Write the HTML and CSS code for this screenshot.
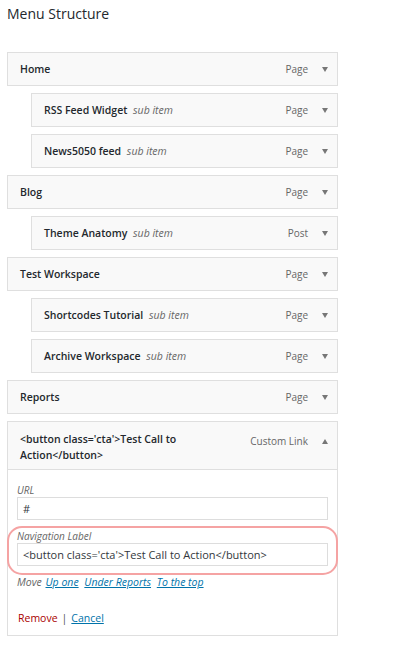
FILE: index.html
```html
<!DOCTYPE html>
<html>
<head>
<meta charset="utf-8">
<link rel="stylesheet" href="styles.css">
</head>
<body>
<h2 class="title">Menu Structure</h2>
<ul class="menu">
  <li class="item"><span class="item-title">Home</span><span class="controls"><span class="type">Page</span><span class="arrow down"></span></span></li>
  <li class="item sub"><span class="item-title">RSS Feed Widget <em class="subtag">sub item</em></span><span class="controls"><span class="type">Page</span><span class="arrow down"></span></span></li>
  <li class="item sub"><span class="item-title">News5050 feed <em class="subtag">sub item</em></span><span class="controls"><span class="type">Page</span><span class="arrow down"></span></span></li>
  <li class="item"><span class="item-title">Blog</span><span class="controls"><span class="type">Page</span><span class="arrow down"></span></span></li>
  <li class="item sub"><span class="item-title">Theme Anatomy <em class="subtag">sub item</em></span><span class="controls"><span class="type">Post</span><span class="arrow down"></span></span></li>
  <li class="item"><span class="item-title">Test Workspace</span><span class="controls"><span class="type">Page</span><span class="arrow down"></span></span></li>
  <li class="item sub"><span class="item-title">Shortcodes Tutorial <em class="subtag">sub item</em></span><span class="controls"><span class="type">Page</span><span class="arrow down"></span></span></li>
  <li class="item sub"><span class="item-title">Archive Workspace <em class="subtag">sub item</em></span><span class="controls"><span class="type">Page</span><span class="arrow down"></span></span></li>
  <li class="item"><span class="item-title">Reports</span><span class="controls"><span class="type">Page</span><span class="arrow down"></span></span></li>
  <li class="open">
    <div class="item open-head"><span class="item-title wrap">&lt;button class='cta'&gt;Test Call to Action&lt;/button&gt;</span><span class="controls"><span class="type">Custom Link</span><span class="arrow up"></span></span></div>
    <div class="settings">
      <label class="field-label">URL</label>
      <div class="input">#</div>
      <label class="field-label">Navigation Label</label>
      <div class="input">&lt;button class='cta'&gt;Test Call to Action&lt;/button&gt;</div>
      <div class="move"><em>Move</em> <a>Up one</a> <a>Under Reports</a> <a>To the top</a></div>
      <div class="actions"><a class="remove">Remove</a><span class="sep">|</span><a class="cancel">Cancel</a></div>
      <div class="highlight"></div>
    </div>
  </li>
</ul>
</body>
</html>
```

FILE: styles.css
```css
html, body {
  margin: 0;
  padding: 0;
  background: #fff;
}
body {
  font-family: "Open Sans", "Noto Sans", sans-serif;
  color: #23282d;
  padding: 4px 0 0 7px;
}
.title {
  margin: 0;
  font-size: 14px;
  font-weight: 400;
  line-height: 20px;
  color: #23282d;
}
.menu {
  list-style: none;
  margin: 28px 0 0 0;
  padding: 0;
  width: 331px;
}
.item {
  box-sizing: border-box;
  height: 34px;
  margin-bottom: 7px;
  border: 1px solid #dfdfdf;
  background: #f9f9f9;
  display: flex;
  align-items: center;
  justify-content: space-between;
  padding: 0 9px 0 12px;
}
.item.sub {
  margin-left: 24px;
}
.item-title {
  font-size: 10.5px;
  font-weight: 600;
  color: #23282d;
  white-space: nowrap;
}
.subtag {
  font-weight: 400;
  color: #666;
  margin-left: 3px;
}
.controls {
  display: flex;
  align-items: center;
  gap: 14px;
}
.type {
  font-size: 10px;
  color: #666;
}
.arrow {
  width: 0;
  height: 0;
  border-left: 3px solid transparent;
  border-right: 3px solid transparent;
}
.arrow.down {
  border-top: 5px solid #777;
}
.arrow.up {
  border-bottom: 5px solid #777;
}
.open {
  margin-top: 2px;
}
.open-head {
  height: 49px;
  margin-bottom: 0;
  align-items: flex-start;
  padding-top: 9px;
}
.item-title.wrap {
  white-space: normal;
  width: 190px;
  line-height: 16px;
}
.open-head .controls {
  padding-top: 3px;
}
.settings {
  position: relative;
  box-sizing: border-box;
  height: 166px;
  border: 1px solid #dfdfdf;
  border-top: 0;
  background: #fff;
  padding: 13px 9px 0 9px;
  font-size: 10.5px;
}
.field-label {
  display: block;
  font-style: italic;
  color: #666;
  font-size: 10px;
  line-height: 14px;
  height: 14px;
}
.input {
  box-sizing: border-box;
  height: 23px;
  border: 1px solid #ddd;
  background: #fff;
  padding: 0 5px;
  line-height: 21px;
  font-size: 11px;
  color: #32373c;
  margin-bottom: 9px;
}
.move {
  margin-top: 0;
  font-size: 10.5px;
  line-height: 14px;
  color: #666;
}
.move em {
  font-style: italic;
  margin-right: 1px;
}
.move a {
  color: #0073aa;
  text-decoration: underline;
  font-style: italic;
  margin-right: 3px;
}
.actions {
  margin-top: 22px;
  font-size: 10.5px;
  line-height: 14px;
  display: flex;
  align-items: center;
}
.remove {
  color: #a00;
  padding-left: 1px;
}
.sep {
  color: #555;
  margin: 0 4px;
}
.cancel {
  color: #0073aa;
  text-decoration: underline;
}
.highlight {
  position: absolute;
  left: -1px;
  right: -1px;
  top: 56px;
  height: 49px;
  box-sizing: border-box;
  border: 2px solid #f5a3a3;
  border-radius: 15px;
  pointer-events: none;
}
```
